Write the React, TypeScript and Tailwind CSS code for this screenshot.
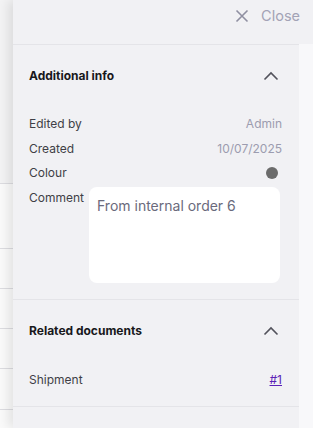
import React from "react";

const Row = ({ label, children }: { label: string; children: React.ReactNode }) => (
  <div className="flex h-[24.5px] items-center justify-between text-[12px]">
    <span className="text-[#3f3f46]">{label}</span>
    {children}
  </div>
);

const ChevronUp = () => (
  <svg width="16" height="10" viewBox="0 0 16 10" fill="none">
    <path d="M1.5 8.5 8 2l6.5 6.5" stroke="#52525b" strokeWidth="1.6" />
  </svg>
);

const SectionHeader = ({ title }: { title: string }) => (
  <div className="flex h-[62px] items-center justify-between pr-[3px]">
    <h3 className="text-[12px] font-bold text-[#18181b]">{title}</h3>
    <ChevronUp />
  </div>
);

export default function App() {
  return (
    <div className="flex h-[428px] w-[313px] overflow-hidden bg-white font-['Inter',sans-serif]">
      <div className="flex w-[13px] shrink-0 flex-col bg-[#fafafa]">
        <div className="h-[184px] border-b border-[#dcdce0] bg-[#f3f3f4]" />
        <div className="h-[65px] border-b border-[#dcdce0]" />
        <div className="h-[40px] border-b border-[#dcdce0]" />
        <div className="h-[40px] border-b border-[#dcdce0]" />
        <div className="h-[40px] border-b border-[#dcdce0]" />
        <div className="h-[41px] border-b border-[#dcdce0]" />
      </div>
      <div className="relative z-10 flex flex-1 flex-col bg-[#f1f1f4] shadow-[-5px_0_10px_rgba(0,0,0,0.09)]">
        <div className="flex h-[44px] shrink-0 items-start justify-end gap-[10px] pr-[13px] pt-[7px] text-[14.5px] text-[#a3a3b6]">
          <svg width="18" height="18" viewBox="0 0 18 18" fill="none">
            <path d="M3.5 3.5l11 11M14.5 3.5l-11 11" stroke="#8f8fa1" strokeWidth="1.6" />
          </svg>
          <span className="leading-[18px]">Close</span>
        </div>
        <div className="flex flex-1">
          <div className="w-[286px] shrink-0 border-t border-[#e4e4e8]">
            <section className="border-b border-[#e4e4e8] pl-[16px] pr-[17px] pb-[16px]">
              <SectionHeader title="Additional info" />
              <div className="pt-[5px]">
                <Row label="Edited by">
                  <span className="text-[#9c9caf]">Admin</span>
                </Row>
                <Row label="Created">
                  <span className="text-[#9c9caf]">10/07/2025</span>
                </Row>
                <Row label="Colour">
                  <span className="mr-[4px] h-[12px] w-[12px] rounded-full bg-[#6b6b6b]" />
                </Row>
                <div className="flex text-[12px]">
                  <span className="w-[60px] shrink-0 pt-[3px] text-[#3f3f46]">Comment</span>
                  <div className="mr-[2px] mt-[1.5px] h-[96px] flex-1 rounded-[8px] bg-white px-[8px] py-[8px] text-[14px] text-[#6a6a7c]">
                    From internal order 6
                  </div>
                </div>
              </div>
            </section>
            <section className="border-b border-[#e4e4e8] pl-[16px] pr-[17px] pb-[13px]">
              <SectionHeader title="Related documents" />
              <div className="pt-[6px]">
                <Row label="Shipment">
                  <a href="#" className="text-[#5b21b6] underline">#1</a>
                </Row>
              </div>
            </section>
          </div>
          <div className="flex-1 bg-[#f8f8fa]" />
        </div>
      </div>
    </div>
  );
}
